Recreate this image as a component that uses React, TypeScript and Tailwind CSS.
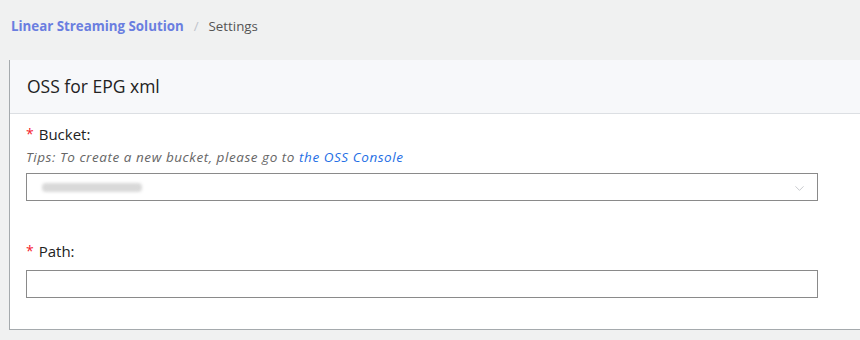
import { ChevronDown } from 'lucide-react'

const font = { fontFamily: '"Open Sans", "Noto Sans", sans-serif' }

function Label({ text }: { text: string }) {
  return (
    <div className="flex items-center text-[15px] text-[#222] leading-5">
      <span className="text-[#f5222d] mr-[5px] text-[14px]">*</span>
      {text}
    </div>
  )
}

export default function App() {
  return (
    <div className="w-[860px] h-[340px] bg-[#f0f1f1] overflow-hidden" style={font}>
      {/* Breadcrumb */}
      <div className="h-[60px] flex items-center pl-[11px] pb-[6px] text-[13.3px]">
        <a className="font-bold text-[#6a7ee0]">Linear Streaming Solution</a>
        <span className="mx-[10px] text-[#c0c4cc]">/</span>
        <span className="text-[#555]">Settings</span>
      </div>

      {/* Card */}
      <div className="ml-[9px] w-[900px] bg-white border-l border-b border-[#a5aaad]">
        <div className="h-[54px] bg-[#f7f8fa] border-b border-[#dcdfe3] flex items-center pl-[17px]">
          <span className="text-[17.5px] text-[#222]">OSS for EPG xml</span>
        </div>

        <div className="pl-[16px] pt-[10px] pb-[31px]">
          <Label text="Bucket:" />
          <div className="mt-[3px] text-[13.5px] italic text-[#666] leading-5 tracking-[0.55px]">
            Tips: To create a new bucket, please go to{' '}
            <a className="text-[#1f6fe5]">the OSS Console</a>
          </div>
          <div className="mt-[6px] w-[792px] h-[28px] border border-[#8a8a8a] flex items-center justify-between px-[15px]">
            <div className="w-[100px] h-[9px] rounded-sm bg-[#d9d9d9] blur-[1.5px]" />
            <ChevronDown size={15} strokeWidth={1.2} className="text-[#b5b8bd] mr-[-5px] mt-[2px]" />
          </div>

          <div className="mt-[40px]">
            <Label text="Path:" />
          </div>
          <div className="mt-[9px] w-[792px] h-[28px] border border-[#8a8a8a]" />
        </div>
      </div>
    </div>
  )
}
